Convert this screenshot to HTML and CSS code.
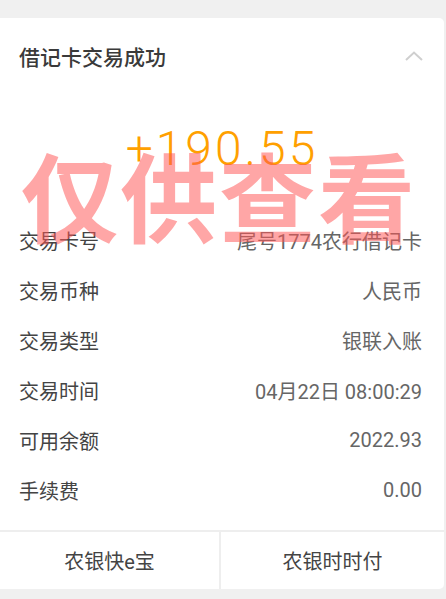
FILE: index.html
```html
<!DOCTYPE html>
<html lang="zh-CN">
<head>
    <meta charset="UTF-8">
    <meta name="viewport" content="width=device-width, initial-scale=1.0">
    <title>借记卡交易成功</title>
    <link rel="stylesheet" href="styles.css">
</head>
<body>
    <div class="page">
        <div class="card">
            <div class="card-header">
                <h1 class="title">借记卡交易成功</h1>
                <svg class="chevron" width="18" height="10" viewBox="0 0 18 10">
                    <path d="M1 9 L9 1.5 L17 9" fill="none" stroke="#cfcfcf" stroke-width="2"/>
                </svg>
            </div>

            <div class="amount">+190.55</div>

            <div class="rows">
                <div class="row"><span class="label">交易卡号</span><span class="value">尾号1774农行借记卡</span></div>
                <div class="row"><span class="label">交易币种</span><span class="value">人民币</span></div>
                <div class="row"><span class="label">交易类型</span><span class="value">银联入账</span></div>
                <div class="row"><span class="label">交易时间</span><span class="value">04月22日 08:00:29</span></div>
                <div class="row"><span class="label">可用余额</span><span class="value">2022.93</span></div>
                <div class="row"><span class="label">手续费</span><span class="value">0.00</span></div>
            </div>

            <div class="actions">
                <button class="action">农银快e宝</button>
                <button class="action">农银时时付</button>
            </div>

            <div class="watermark">仅供查看</div>
        </div>
    </div>
</body>
</html>
```

FILE: styles.css
```css
:root {
    --page-bg: #f0f0f0;
    --line: #eeeeee;
    --text-dark: #444;
    --text-light: #666;
    --orange: #ffa000;
}

* {
    box-sizing: border-box;
}

body {
    margin: 0;
    background: var(--page-bg);
    font-family: Roboto, "Noto Sans CJK SC", sans-serif;
}

.page {
    padding: 18px 0 10px;
}

.card {
    position: relative;
    width: 444px;
    background: #fff;
    border-radius: 0 5px 5px 0;
    overflow: hidden;
}

.card-header {
    display: flex;
    align-items: center;
    justify-content: space-between;
    height: 76px;
    padding: 0 21px 0 19px;
}

.title {
    margin: 0;
    font-size: 21px;
    font-weight: 500;
    color: #3a3a3a;
}

.amount {
    height: 121px;
    padding-top: 24px;
    text-align: center;
    font-size: 48px;
    line-height: 62px;
    font-weight: 300;
    letter-spacing: 3px;
    color: var(--orange);
}

.rows {
    padding-bottom: 15px;
    border-bottom: 2px solid var(--line);
}

.row {
    display: flex;
    justify-content: space-between;
    align-items: center;
    height: 50px;
    padding: 0 22px 0 19px;
    font-size: 20px;
}

.label {
    color: var(--text-dark);
}

.value {
    color: var(--text-light);
}

.actions {
    display: grid;
    grid-template-columns: 219px 1fr;
    gap: 2px;
    background: var(--line);
}

.action {
    height: 57px;
    border: none;
    background: #fff;
    font-family: inherit;
    font-size: 20px;
    color: var(--text-dark);
}

.watermark {
    position: absolute;
    top: 107px;
    left: 0;
    right: 0;
    text-align: center;
    font-family: "Noto Sans CJK SC", sans-serif;
    font-size: 97px;
    font-weight: 700;
    line-height: 136px;
    letter-spacing: 2px;
    padding-right: 6px;
    color: rgba(255, 85, 85, 0.52);
    pointer-events: none;
}
```
